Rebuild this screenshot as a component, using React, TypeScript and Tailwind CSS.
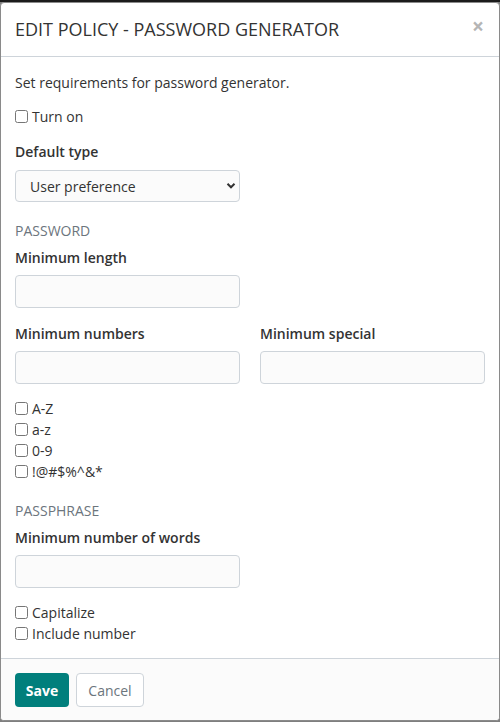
import React from 'react';

const font = { fontFamily: '"Open Sans", "Noto Sans", sans-serif' };

const Check: React.FC<{ label: string }> = ({ label }) => (
  <label className="flex h-[21px] items-center gap-[4px] text-[14px] text-[#333]">
    <input type="checkbox" className="m-0 h-[13px] w-[13px]" />
    <span>{label}</span>
  </label>
);

const Label: React.FC<{ text: string; className?: string }> = ({ text, className = '' }) => (
  <div className={`flex h-[21px] items-center text-[14px] font-semibold text-[#333] ${className}`}>{text}</div>
);

const Field: React.FC<{ className?: string }> = ({ className = '' }) => (
  <input
    type="text"
    className={`block h-[33px] w-[225px] rounded-[4px] border border-[#ced4da] bg-[#fbfbfb] px-3 text-[14px] outline-none ${className}`}
  />
);

export default function App() {
  return (
    <div className="min-h-[722px] w-[500px] bg-[#7f7f7f]" style={font}>
      {/* backdrop strip over page */}
      <div className="h-[2px] bg-[#1b1b1b]" />
      <div className="w-[500px] overflow-hidden rounded-[4px] border border-[#8a8a8a] bg-white">
        {/* Header */}
        <div className="flex h-[54px] items-center justify-between border-b border-[#ced4da] pl-[14px] pr-[14px]">
          <h5 className="text-[18px] font-normal text-[#333]">EDIT POLICY - PASSWORD GENERATOR</h5>
          <button className="-mt-[7px] mr-[1px] text-[21px] font-bold leading-none text-[#b5b5b5]">×</button>
        </div>

        {/* Body */}
        <div className="px-[14px] pt-[15px] pb-[14px]">
          <div className="flex h-[21px] items-center text-[14px] text-[#333]">Set requirements for password generator.</div>
          <div className="mt-[13px]">
            <Check label="Turn on" />
          </div>

          <Label text="Default type" className="mt-[14px]" />
          <div className="relative mt-[8px] w-[225px]">
            <select className="block h-[32px] w-[225px] appearance-none rounded-[4px] border border-[#ced4da] bg-[#fbfbfb] pl-[14px] text-[14px] text-[#333] outline-none">
              <option>User preference</option>
            </select>
            <svg className="pointer-events-none absolute right-[4px] top-[12px] h-[8px] w-[10px]" viewBox="0 0 10 8">
              <path d="M1.5 1.8 L5 5.3 L8.5 1.8" fill="none" stroke="#333" strokeWidth="2" />
            </svg>
          </div>

          <div className="mt-[18px] flex h-[21px] items-center text-[14px] text-[#6c757d]">PASSWORD</div>
          <Label text="Minimum length" className="mt-[6px]" />
          <Field className="mt-[7px]" />

          <div className="mt-[15px] grid grid-cols-2 gap-x-[20px]">
            <div>
              <Label text="Minimum numbers" />
              <Field className="mt-[7px]" />
            </div>
            <div>
              <Label text="Minimum special" />
              <Field className="mt-[7px]" />
            </div>
          </div>

          <div className="mt-[14px] flex flex-col">
            <Check label="A-Z" />
            <Check label="a-z" />
            <Check label="0-9" />
            <Check label="!@#$%^&*" />
          </div>

          <div className="mt-[18px] flex h-[21px] items-center text-[14px] text-[#6c757d]">PASSPHRASE</div>
          <Label text="Minimum number of words" className="mt-[6px]" />
          <Field className="mt-[7px]" />

          <div className="mt-[14px] flex flex-col">
            <Check label="Capitalize" />
            <Check label="Include number" />
          </div>
        </div>

        {/* Footer */}
        <div className="flex gap-[7px] border-t border-[#ced4da] bg-[#fbfbfb] px-[14px] pt-[14px] pb-[13px]">
          <button className="h-[34px] w-[54px] rounded-[4px] bg-[#017f7c] text-[14px] font-bold text-white">Save</button>
          <button className="h-[34px] w-[68px] rounded-[4px] border border-[#ced4da] bg-white text-[14px] text-[#6c757d]">Cancel</button>
        </div>
      </div>
    </div>
  );
}
